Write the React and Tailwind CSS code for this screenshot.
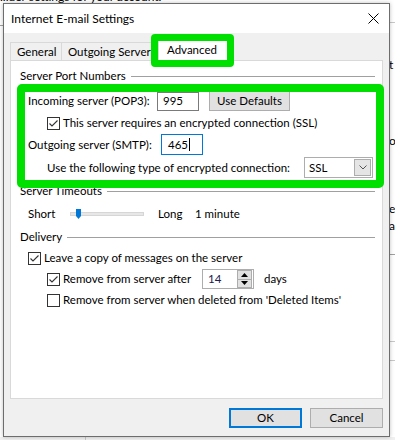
import React from 'react';

const Check = ({ checked }) => (
  <span className="w-[13px] h-[13px] border border-[#333333] bg-white flex items-center justify-center shrink-0">
    {checked && (
      <svg width="11" height="11" viewBox="0 0 11 11">
        <path d="M1.5 5.5 L4 8 L9.5 2.5" fill="none" stroke="#333333" strokeWidth="1.1" />
      </svg>
    )}
  </span>
);

const GroupHeader = ({ label, className = 'mt-[7px]' }) => (
  <div className={`h-[16px] flex items-center pl-[9px] pr-[7px] ${className}`}>
    <span>{label}</span>
    <span className="flex-1 h-px bg-[#a0a0a0] ml-[5px]" />
  </div>
);

const Button = ({ children, primary, className = '' }) => (
  <div
    className={`h-[20px] flex items-center justify-center bg-[#e1e1e1] ${
      primary ? 'border-2 border-[#0078d7]' : 'border border-[#adadad]'
    } ${className}`}
  >
    {children}
  </div>
);

export default function App() {
  return (
    <div className="relative w-[395px] h-[440px] overflow-hidden bg-white font-['Lato',sans-serif] text-[11.5px] text-black leading-none whitespace-nowrap">
      {/* window behind the dialog */}
      <div className="flex flex-col h-full">
        <div className="-mt-[9px] text-[12px]">...uer settings for your account.</div>
        <div className="flex-1 flex">
          <div className="w-[3px] flex flex-col">
            <div className="mt-[22px] h-px bg-[#a0a0a0]" />
          </div>
          <div className="flex-1" />
          <div className="w-[5px] flex flex-col overflow-hidden text-[12px]">
            <div className="mt-[19px] h-px bg-[#c8c8c8]" />
            <div className="mt-[36px] -ml-[1px]">t</div>
            <div className="mt-[64px] -ml-[1px]">o</div>
            <div className="mt-[56px] -ml-[1px]">e</div>
            <div className="mt-[5px] -ml-[1px]">a</div>
            <div className="mt-[22px] h-px bg-[#a0a0a0]" />
            <div className="mt-[86px] h-px bg-[#c8c8c8]" />
            <div className="mt-[18px] h-px bg-[#c8c8c8]" />
          </div>
        </div>
        <div className="h-[3px] bg-[#f0f0f0] flex">
          <div className="ml-[85px] w-px bg-[#c8c8c8]" />
        </div>
      </div>

      {/* dialog window */}
      <div className="absolute left-[3px] top-[3px] w-[387px] h-[434px] border border-[#6d6d6d] bg-[#f0f0f0] flex flex-col shadow-[0_0_4px_rgba(0,0,0,0.25)]">
        <div className="h-[29px] bg-white flex items-center pl-[7px] pr-[10px] shrink-0">
          <span className="text-[12px]">Internet E-mail Settings</span>
          <svg className="ml-auto" width="11" height="11" viewBox="0 0 11 11">
            <path d="M0.5 0.5 L10.5 10.5 M10.5 0.5 L0.5 10.5" stroke="#000" strokeWidth="1" />
          </svg>
        </div>

        <div className="flex flex-col px-[6px] flex-1">
          {/* tabs */}
          <div className="flex items-end h-[25px] mt-[2px]">
            <div className="h-[18px] w-[52px] border border-b-0 border-[#d9d9d9] bg-[#f0f0f0] flex items-center pl-[6px]">General</div>
            <div className="h-[18px] w-[96px] border border-b-0 border-l-0 border-[#d9d9d9] bg-[#f0f0f0] flex items-center pl-[6px] overflow-hidden">Outgoing Server</div>
            <div className="h-[23px] w-[70px] border border-b-0 border-[#d9d9d9] bg-white flex items-center pl-[8px] -mb-px relative z-10">Advanced</div>
          </div>

          {/* tab panel */}
          <div className="h-[339px] border border-[#d9d9d9] bg-white flex flex-col">
            <GroupHeader label="Server Port Numbers" />

            <div className="h-[20px] flex items-center pl-[17px] mt-[7px]">
              <span className="w-[129px]">Incoming server (POP3):</span>
              <div className="w-[42px] h-[19px] border border-[#7a7a7a] flex items-center pl-[5px]">995</div>
              <Button className="ml-[10px] w-[81px] h-[19px]">Use Defaults</Button>
            </div>

            <div className="h-[14px] flex items-center pl-[36px] mt-[5px]">
              <Check checked />
              <span className="ml-[3px]">This server requires an encrypted connection (SSL)</span>
            </div>

            <div className="h-[21px] flex items-center pl-[17px] mt-[4px]">
              <span className="w-[133px]">Outgoing server (SMTP):</span>
              <div className="w-[42px] h-[21px] border border-[#0078d7] flex items-center pl-[6px]">
                465<span className="w-px h-[13px] bg-black ml-px" />
              </div>
            </div>

            <div className="h-[21px] flex items-center pl-[36px] mt-[2px]">
              <span className="w-[257px]">Use the following type of encrypted connection:</span>
              <div className="w-[69px] h-[21px] border border-[#adadad] flex items-center pl-[4px] pr-px">
                <span>SSL</span>
                <div className="ml-auto w-[17px] h-[17px] bg-[#e5e5e5] border border-[#adadad] flex items-center justify-center">
                  <svg width="8" height="5" viewBox="0 0 8 5">
                    <path d="M0.5 0.5 L4 4 L7.5 0.5" fill="none" stroke="#555" strokeWidth="1" />
                  </svg>
                </div>
              </div>
            </div>

            <GroupHeader label="Server Timeouts" className="mt-[5px]" />

            <div className="h-[16px] flex items-center pl-[17px] mt-[7px]">
              <span className="w-[42px]">Short</span>
              <div className="w-[74px] h-[16px] flex items-center relative">
                <div className="w-full h-[4px] bg-[#e7e7e7] border border-[#d6d6d6]" />
                <svg className="absolute left-[6px] top-[3px]" width="5" height="10" viewBox="0 0 5 10">
                  <path d="M0 0 H5 V7 L2.5 10 L0 7 Z" fill="#0078d7" />
                </svg>
              </div>
              <span className="ml-[14px] w-[37px]">Long</span>
              <span>1 minute</span>
            </div>

            <GroupHeader label="Delivery" />

            <div className="h-[14px] flex items-center pl-[17px] mt-[6px]">
              <Check checked />
              <span className="ml-[3px]">Leave a copy of messages on the server</span>
            </div>

            <div className="h-[20px] flex items-center pl-[36px] mt-[4px]">
              <Check checked />
              <span className="ml-[3px] w-[139px]">Remove from server after</span>
              <div className="w-[52px] h-[20px] border border-[#adadad] flex items-center pl-[5px] pr-px">
                <span className="text-[#202050]">14</span>
                <div className="ml-auto w-[15px] h-[18px] flex flex-col border border-[#adadad] bg-[#e1e1e1]">
                  <div className="flex-1 flex items-center justify-center border-b border-[#adadad]">
                    <svg width="7" height="4" viewBox="0 0 7 4"><path d="M3.5 0 L7 4 H0 Z" fill="#000" /></svg>
                  </div>
                  <div className="flex-1 flex items-center justify-center">
                    <svg width="7" height="4" viewBox="0 0 7 4"><path d="M0 0 H7 L3.5 4 Z" fill="#000" /></svg>
                  </div>
                </div>
              </div>
              <span className="ml-[10px]">days</span>
            </div>

            <div className="h-[14px] flex items-center pl-[36px] mt-[4px]">
              <Check />
              <span className="ml-[3px]">Remove from server when deleted from 'Deleted Items'</span>
            </div>
          </div>

          {/* footer buttons */}
          <div className="flex justify-end gap-[8px] mt-[9px]">
            <Button primary className="w-[73px]">OK</Button>
            <Button className="w-[73px]">Cancel</Button>
          </div>
        </div>

        {/* highlight boxes */}
        <div className="absolute left-[147px] top-[30px] w-[83px] h-[33px] border-[7px] border-[#00e000] rounded-[4px] z-20" />
        <div className="absolute left-[13px] top-[80px] w-[367px] h-[104px] border-[8px] border-[#00e000] rounded-[5px] z-20" />
      </div>
    </div>
  );
}
